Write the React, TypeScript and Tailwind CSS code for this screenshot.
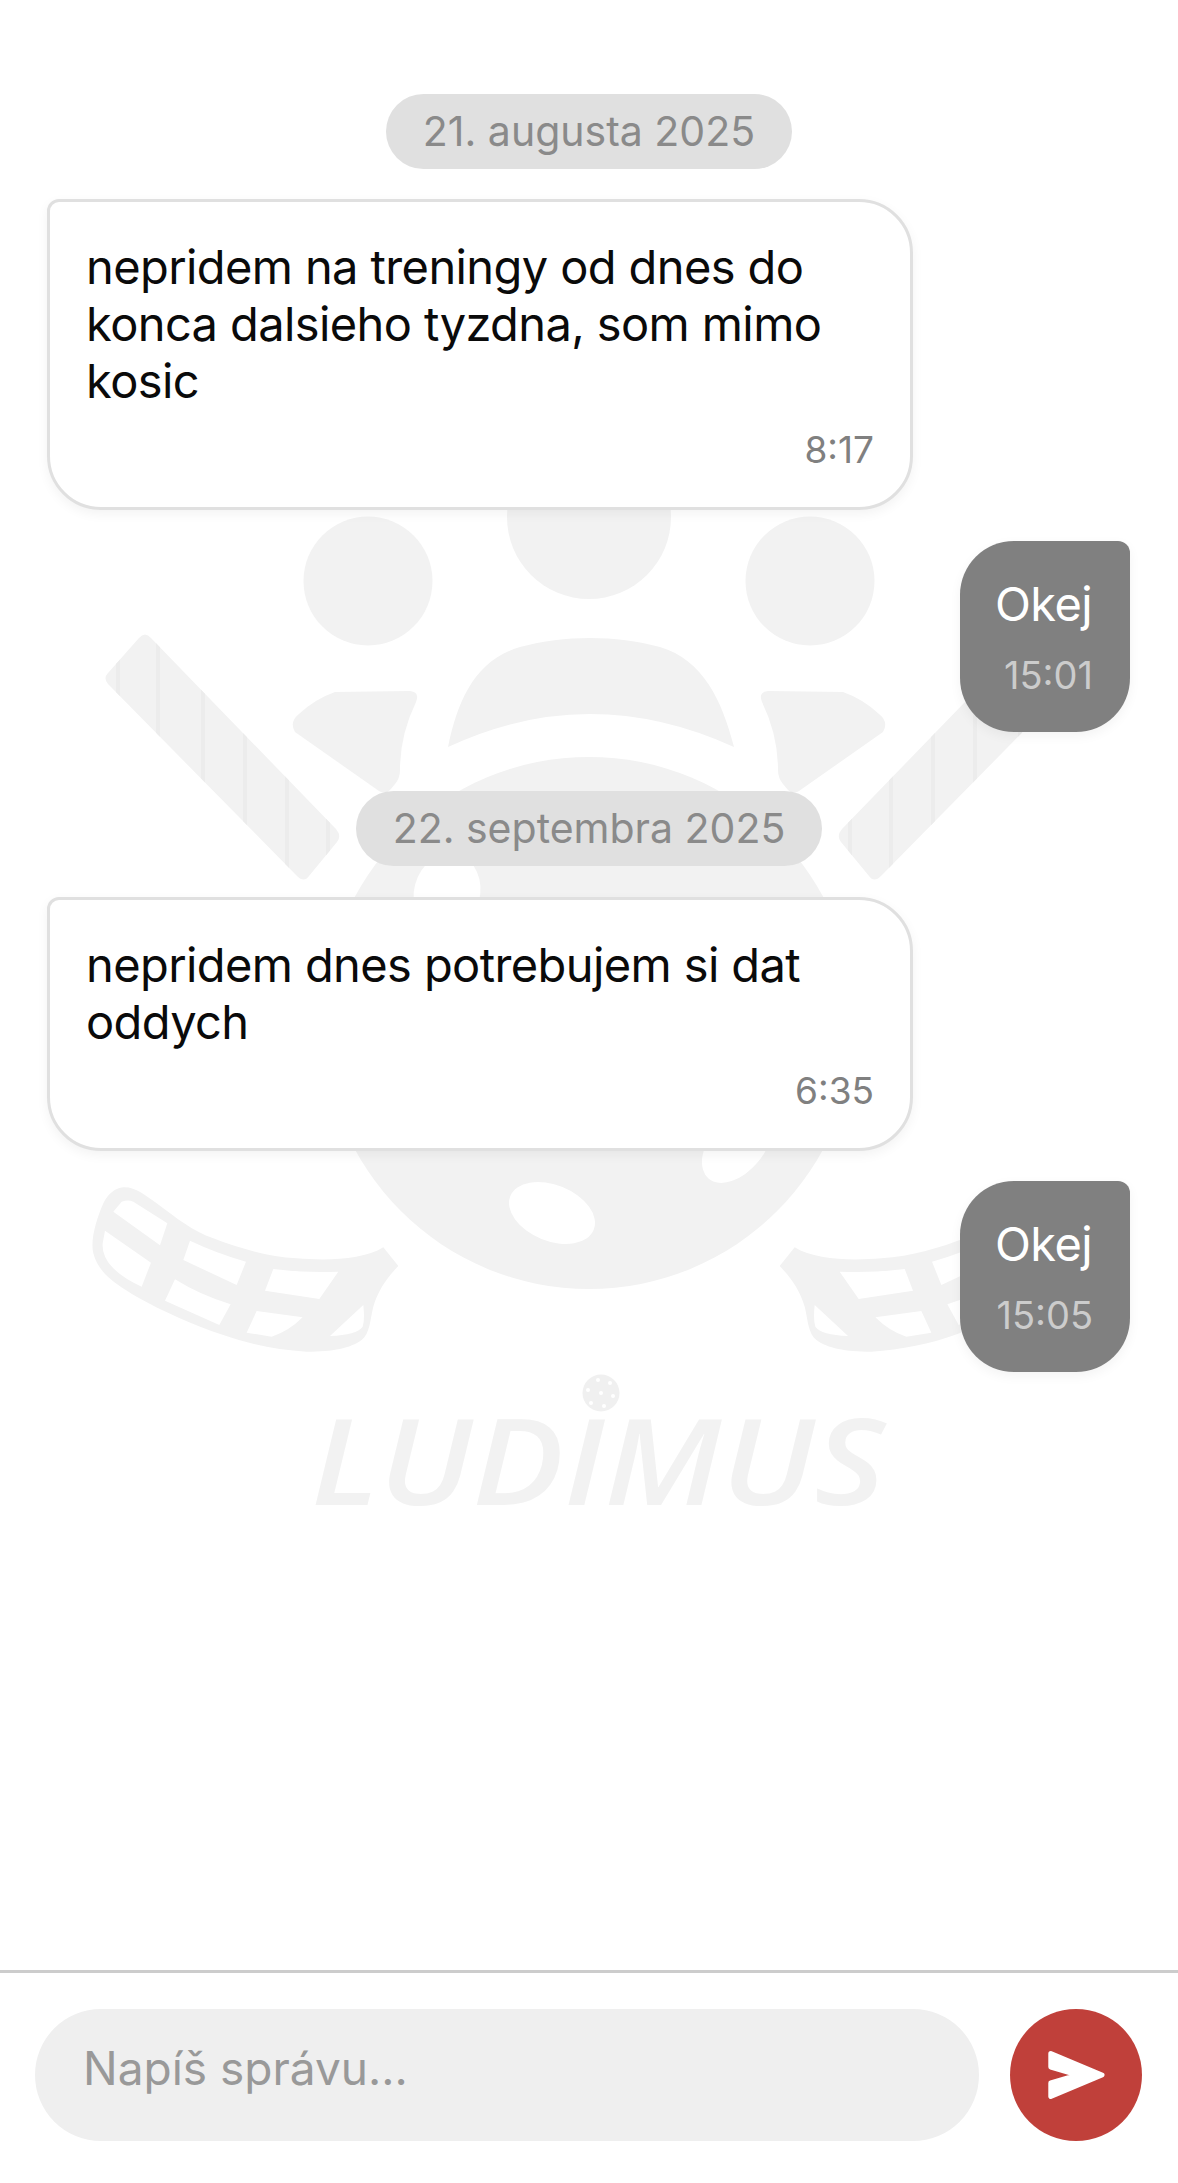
const stripes = [118, 158, 203, 245, 287, 328];

function Stick() {
  return (
    <g>
      <path d="M139 638 Q145 631 151 638 L336 829 Q342 836 337 842 L309 876 Q304 883 297 876 L108 684 Q103 678 108 673 Z" fill="#f2f2f2" />
      <clipPath id="stick-clip">
        <path d="M139 638 Q145 631 151 638 L336 829 Q342 836 337 842 L309 876 Q304 883 297 876 L108 684 Q103 678 108 673 Z" />
      </clipPath>
      <g clipPath="url(#stick-clip)">
        {stripes.map((x) => (
          <rect key={x} x={x - 2} y={620} width={4} height={270} fill="#ececec" />
        ))}
      </g>
    </g>
  );
}

function Blade() {
  return (
    <g transform="translate(80 1170) scale(0.3333)">
      <path
        fillRule="evenodd"
        fill="#f2f2f2"
        d="M130 52 C165 50 195 75 230 100 C290 145 340 185 400 205 C470 232 560 260 650 265 C740 272 850 270 910 232 L955 288 C920 325 895 360 880 410 C870 450 870 490 845 510 C810 535 760 545 680 545 C590 540 500 520 430 495 C340 465 250 425 170 380 C110 345 55 310 40 250 C30 210 50 145 70 100 C85 70 105 55 130 52 Z
        M100 125 L125 95 Q145 88 160 95 L262 160 L240 226 Z
        M75 182 L213 278 L185 350 Q130 325 100 295 Q65 260 68 220 Z
        M330 212 Q410 250 498 275 L470 345 L310 270 Z
        M285 328 Q360 375 452 403 L418 465 L255 392 Z
        M580 297 Q680 310 775 305 L718 387 L555 362 Z
        M530 423 L668 442 Q625 485 575 500 L500 488 Z
        M850 405 Q855 450 848 470 Q830 495 750 498 Z"
      />
    </g>
  );
}

function Side() {
  return (
    <g>
      <Stick />
      <path
        d="M295 732 Q289 722 299 714 Q315 699 335 692 L410 691 Q420 692 416 702 Q400 735 400 770 Q400 778 395 784 L390 790 Q385 795 379 791 Z"
        fill="#f2f2f2"
      />
      <circle cx="368" cy="581" r="64.5" fill="#f2f2f2" />
      <Blade />
    </g>
  );
}

function Watermark() {
  return (
    <svg className="absolute inset-0 w-full h-full pointer-events-none" viewBox="0 0 1178 2183">
      <Side />
      <g transform="translate(1178 0) scale(-1 1)">
        <Side />
      </g>
      <circle cx="589" cy="517" r="82" fill="#f2f2f2" />
      <path d="M448 747 C458 700 475 660 520 647 C565 635 615 635 660 647 C703 660 722 700 734 747 Q589 681 448 747 Z" fill="#f2f2f2" />
      <circle cx="589" cy="1023" r="266" fill="#f2f2f2" />
      <ellipse cx="552" cy="1213" rx="45" ry="28" transform="rotate(22 552 1213)" fill="#ffffff" />
      <ellipse cx="737" cy="1145" rx="44" ry="27" transform="rotate(-50 737 1145)" fill="#ffffff" />
      <ellipse cx="447" cy="893" rx="33" ry="40" transform="rotate(15 447 893)" fill="#ffffff" />
      <text
        x="311"
        y="1505"
        textLength="574"
        lengthAdjust="spacingAndGlyphs"
        fontFamily="'Open Sans', sans-serif"
        fontStyle="italic"
        fontWeight="650"
        fontSize="119"
        fill="#f2f2f2"
      >
        LUDIMUS
      </text>
      <circle cx="601" cy="1393" r="18.5" fill="#f0f0f0" />
      {[
        [601, 1393],
        [598, 1380],
        [610, 1383],
        [588, 1390],
        [613, 1396],
        [591, 1403],
        [604, 1406],
      ].map(([cx, cy]) => (
        <circle key={`${cx}-${cy}`} cx={cx} cy={cy} r="2" fill="#ffffff" />
      ))}
    </svg>
  );
}

function DatePill({ children }: { children: string }) {
  return (
    <div className="flex justify-center">
      <div className="flex h-[75px] items-center rounded-full bg-[#e0e0e0] px-[37px] text-[41px] text-[#8a8a8a]">
        {children}
      </div>
    </div>
  );
}

function Incoming({ text, time }: { text: string; time: string }) {
  return (
    <div className="flex justify-start pl-[47px]">
      <div className="w-[866px] rounded-[54px] rounded-tl-[12px] border-[3px] border-[#e0e0e0] bg-white pb-[37px] pl-[36px] pr-[36px] pt-[36px] shadow-[0_4px_12px_rgba(0,0,0,0.05)]">
        <p className="text-[47px] leading-[57px] tracking-[-0.6px] text-[#0a0a0a]">{text}</p>
        <p className="mt-[21px] text-right text-[37px] leading-[40px] text-[#808080]">{time}</p>
      </div>
    </div>
  );
}

function Outgoing({ text, time }: { text: string; time: string }) {
  return (
    <div className="flex justify-end pr-[48px]">
      <div className="h-[191px] w-[170px] rounded-[54px] rounded-tr-[12px] bg-[#808080] pl-[30px] pr-[37px] pt-[34px] text-right shadow-[0_4px_12px_rgba(0,0,0,0.05)]">
        <p className="whitespace-nowrap pr-[1px] text-[47px] leading-[57px] tracking-[-0.6px] text-white">{text}</p>
        <p className="mt-[23px] whitespace-nowrap text-[38px] leading-[40px] text-[#cccccc]">{time}</p>
      </div>
    </div>
  );
}

export default function App() {
  return (
    <div className="relative flex h-[2183px] w-full flex-col overflow-hidden bg-white font-['Inter',sans-serif]">
      <Watermark />
      <main className="relative flex flex-1 flex-col pt-[94px]">
        <DatePill>21. augusta 2025</DatePill>
        <div className="mt-[30px]">
          <Incoming text="nepridem na treningy od dnes do konca dalsieho tyzdna, som mimo kosic" time="8:17" />
        </div>
        <div className="mt-[31px]">
          <Outgoing text="Okej" time="15:01" />
        </div>
        <div className="mt-[59px]">
          <DatePill>22. septembra 2025</DatePill>
        </div>
        <div className="mt-[31px]">
          <Incoming text="nepridem dnes potrebujem si dat oddych" time="6:35" />
        </div>
        <div className="mt-[30px]">
          <Outgoing text="Okej" time="15:05" />
        </div>
      </main>
      <footer className="relative flex gap-[31px] border-t-[3px] border-[#cccccc] bg-white pb-[42px] pl-[35px] pr-[36px] pt-[36px]">
        <input
          readOnly
          placeholder="Napíš správu..."
          className="h-[132px] min-w-0 flex-1 rounded-full bg-[#efefef] pb-[14px] pl-[48px] pr-[48px] text-[46px] outline-none placeholder:text-[#999999]"
        />
        <button className="flex h-[132px] w-[132px] items-center justify-center rounded-full bg-[#c0403a]">
          <svg width="132" height="132" viewBox="0 0 132 132">
            <path
              d="M40.8 44.5 L92 66 L40.8 87.5 L40.8 74 L68 66 L40.8 58 Z"
              fill="#ffffff"
              stroke="#ffffff"
              strokeWidth="5"
              strokeLinejoin="round"
            />
          </svg>
        </button>
      </footer>
    </div>
  );
}
